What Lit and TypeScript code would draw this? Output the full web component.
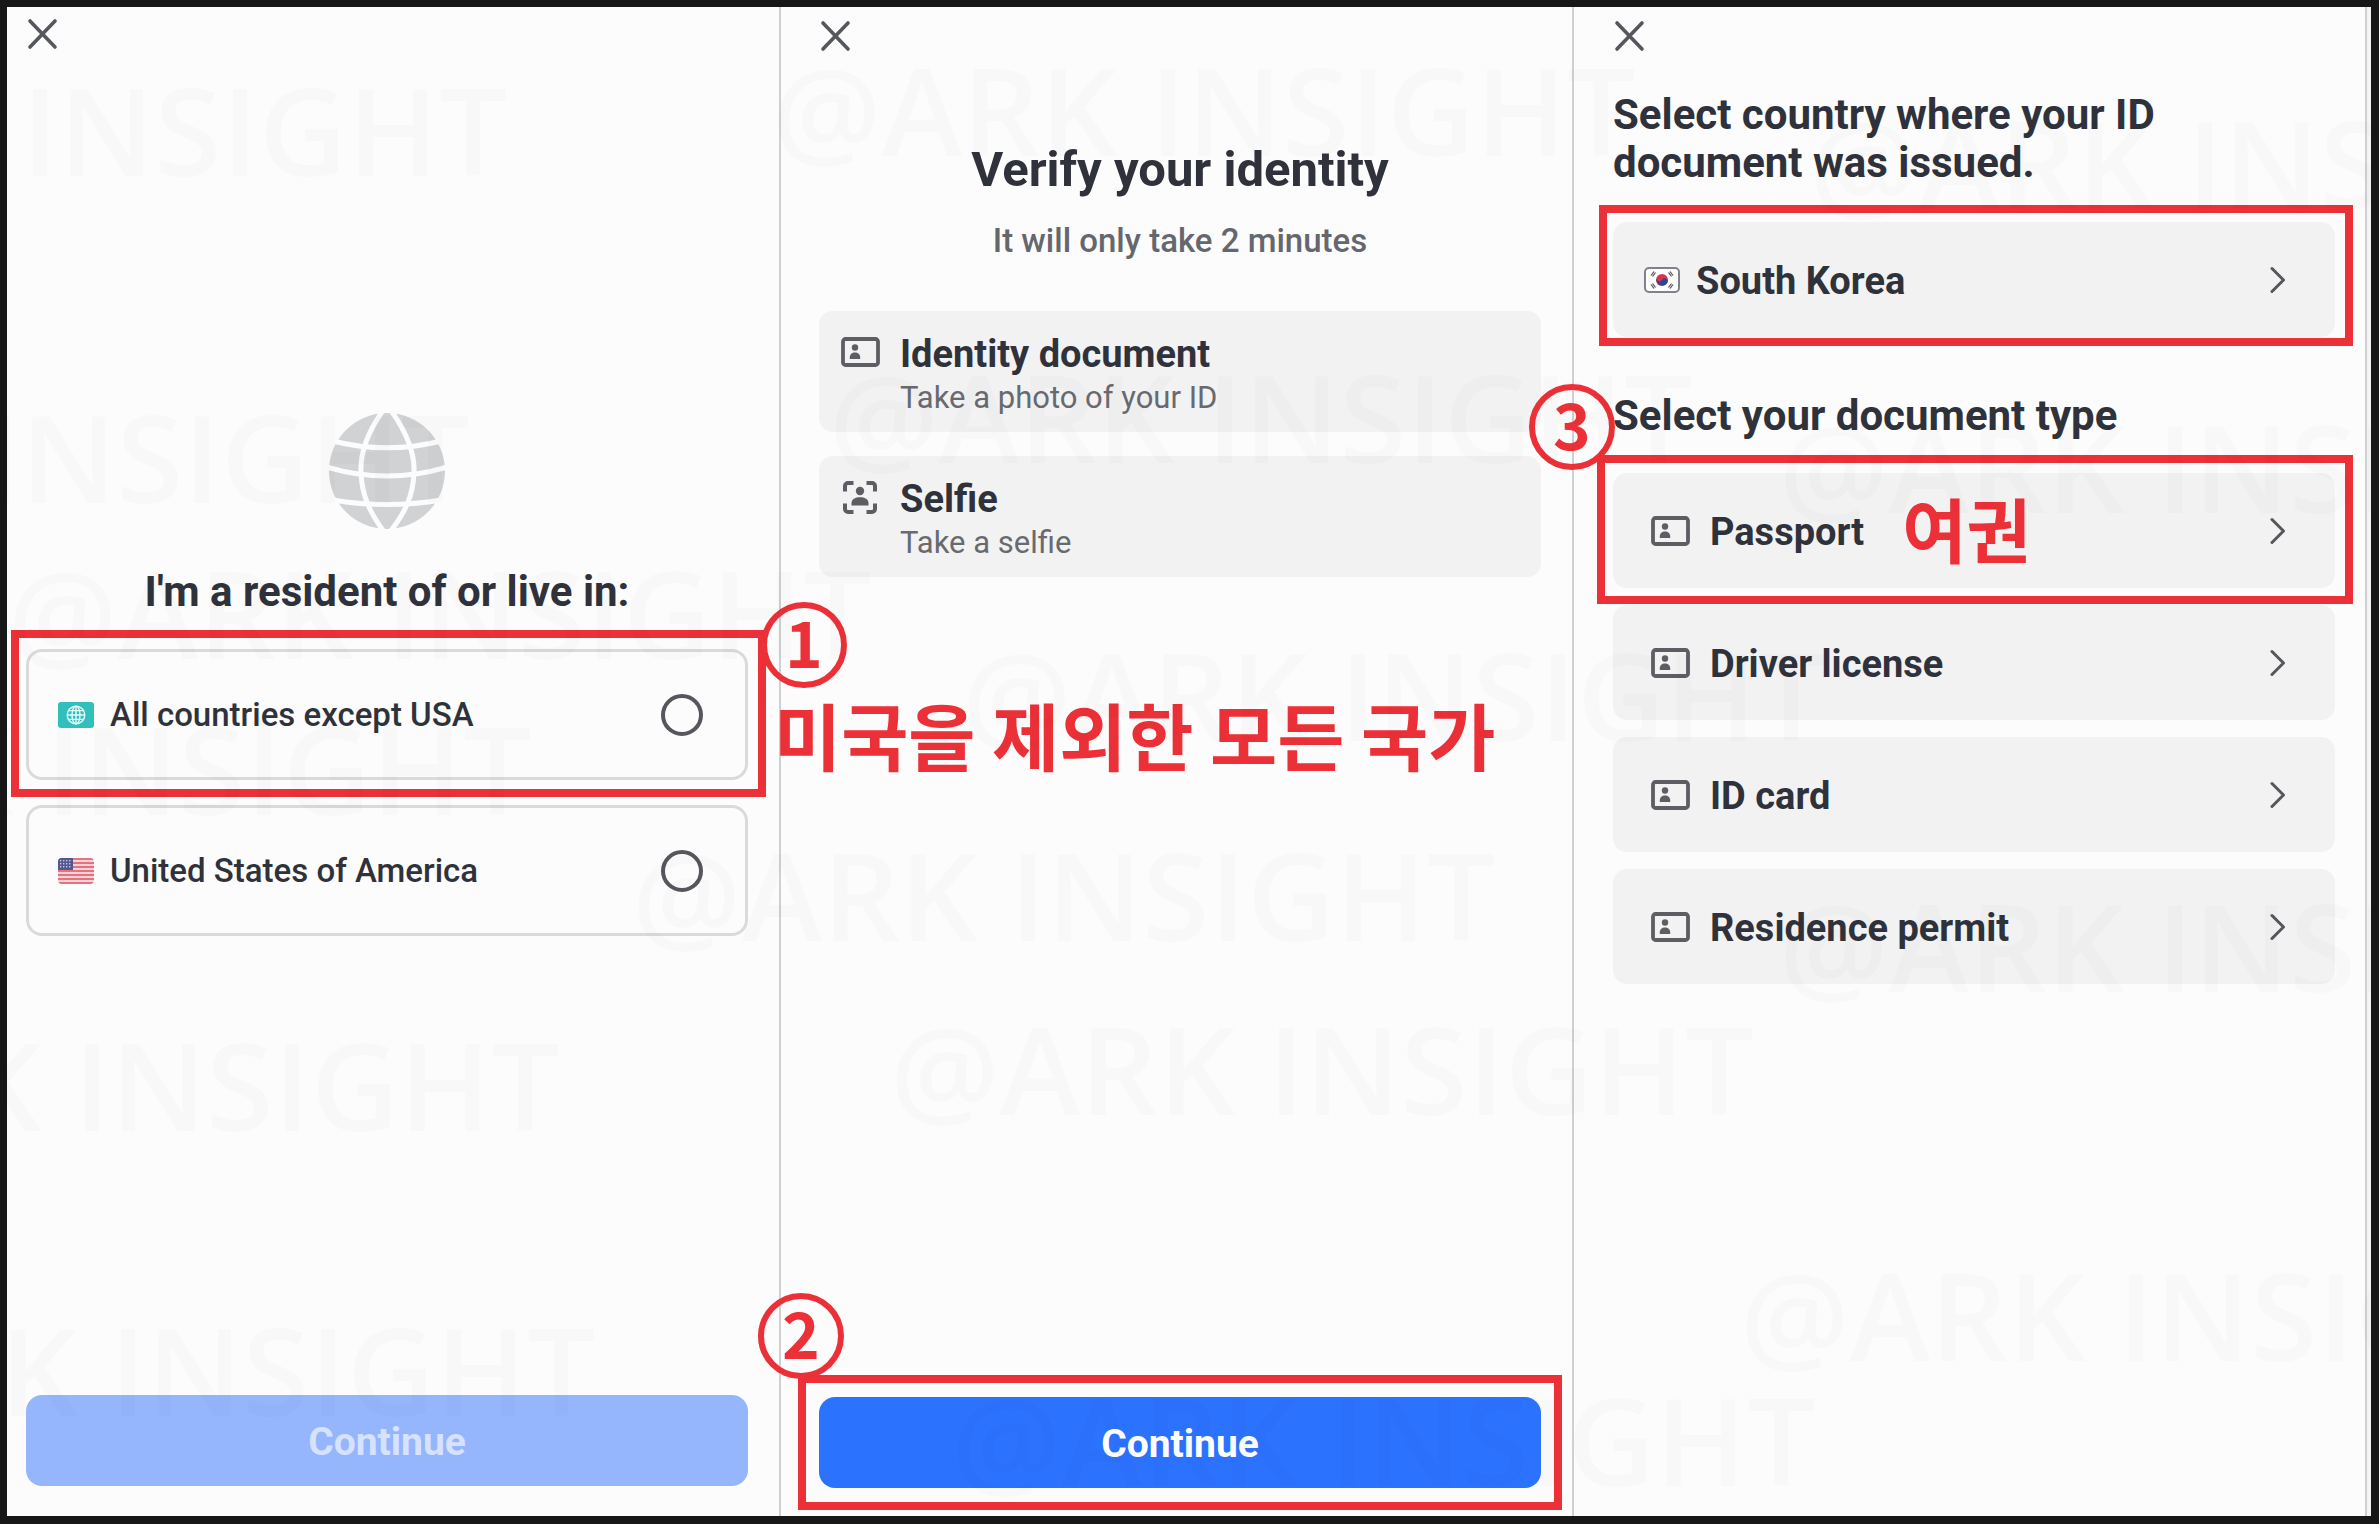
import { LitElement, html, css, svg } from "lit";
import { customElement, property, state } from "lit/decorators.js";
import { styleMap } from "lit/directives/style-map.js";

/* ---------- icons ---------- */

const closeIcon = html`<svg class="icon" width="32" height="32" viewBox="0 0 32 32" aria-hidden="true">
  <path d="M4 3 29 29M29 3 4 29" fill="none" stroke="#55575c" stroke-width="3.6" stroke-linecap="round" />
</svg>`;

const chevronIcon = html`<svg class="icon" width="16" height="28" viewBox="0 0 16 28" aria-hidden="true">
  <path d="M2 2.500 13.500 14 2 25.500" fill="none" stroke="#55575c" stroke-width="3" stroke-linecap="round" stroke-linejoin="round" />
</svg>`;

const documentIcon = html`<svg class="icon" width="40" height="40" viewBox="0 0 40 40" aria-hidden="true">
  <rect x="3" y="7" width="35" height="26" rx="2.500" fill="none" stroke="#5c5e63" stroke-width="3.800" />
  <circle cx="15" cy="15.500" r="3.200" fill="#5c5e63" />
  <path d="M9.800 27v-1.600c0-3.400 2.400-5 5.200-5s5.200 1.600 5.200 5V27z" fill="#5c5e63" />
</svg>`;

const selfieIcon = html`<svg class="icon" width="40" height="40" viewBox="0 0 40 40" aria-hidden="true">
  <g fill="none" stroke="#5c5e63" stroke-width="4">
    <path d="M13.500 6H8a3 3 0 0 0-3 3v5.500" />
    <path d="M26.500 6H32a3 3 0 0 1 3 3v5.500" />
    <path d="M13.500 35H8a3 3 0 0 1-3-3v-5.500" />
    <path d="M26.500 35H32a3 3 0 0 0 3-3v-5.500" />
  </g>
  <circle cx="20" cy="14" r="4.200" fill="#5c5e63" />
  <path d="M11.500 28.500V26c0-3.800 4-5.800 8.500-5.800s8.500 2 8.500 5.800v2.500z" fill="#5c5e63" />
</svg>`;

const globeIcon = html`<svg class="globe" width="116" height="116" viewBox="0 0 116 116" aria-hidden="true">
  <circle cx="58" cy="58" r="58" fill="#d1d2d4" />
  <g fill="none" stroke="#fcfcfc" stroke-width="5">
    <path d="M55 -4C37 21 31 41 32 60c1 22 8 39 24 60" />
    <path d="M61 -4c18 25 25 45 24 64-1 22-8 39-25 60" />
    <path d="M4 28c34 9 74 9 108 0" />
    <path d="M-2 54c38 12 82 12 120 0" />
    <path d="M4 87c34 6 74 6 108 0" />
  </g>
</svg>`;

const worldFlag = html`<svg class="icon" width="36" height="26" viewBox="0 0 36 26" aria-hidden="true">
  <rect width="36" height="26" rx="3" fill="#31bfbb" />
  <g fill="none" stroke="#e6fbfa" stroke-width="1.400">
    <circle cx="18" cy="13" r="8.800" />
    <ellipse cx="18" cy="13" rx="4" ry="8.800" />
    <path d="M9.200 13h17.600M18 4.200v17.600M10.500 8.600h15M10.500 17.400h15" />
  </g>
</svg>`;

const usaFlag = html`<svg class="icon" width="36" height="26" viewBox="0 0 36 26" aria-hidden="true">
  <clipPath id="usa"><rect width="36" height="26" rx="4" /></clipPath>
  <g clip-path="url(#usa)">
    <rect width="36" height="26" fill="#f8d3d6" />
    ${[0, 1, 2, 3, 4, 5, 6].map((i) => svg`<rect y=${i * 4} width="36" height="2" fill="#e27481" />`)}
    <rect width="15" height="12" fill="#55578f" />
    ${[2, 5, 8, 11].map((x) => [2, 5, 8].map((y) => svg`<rect x=${x} y=${y} width="1.400" height="1.400" fill="#c3c5e2" />`))}
  </g>
</svg>`;

const koreaFlag = html`<svg class="icon" width="36" height="26" viewBox="0 0 36 26" aria-hidden="true">
  <rect x="1" y="1" width="34" height="24" rx="4" fill="#fff" stroke="#7f828a" stroke-width="2" />
  <circle cx="18" cy="13" r="6" fill="#d8344c" />
  <path d="M12.600 10.500a3 3 0 0 0 5.400 2.500 3 3 0 0 1 5.400 2.600A6 6 0 0 1 12.600 10.500z" fill="#27479b" />
  <g stroke="#4a4c52" stroke-width="1.200">
    <path d="M7 8.500l3-4M8.500 9.500l3-4M7 17.500l3 4M8.500 16.500l3 4" />
    <path d="M29 8.500l-3-4M27.500 9.500l-3-4M29 17.500l-3 4M27.500 16.500l-3 4" />
  </g>
</svg>`;

/* ---------- data ---------- */

const residences = [
  { id: "world", label: "All countries except USA", flag: worldFlag },
  { id: "usa", label: "United States of America", flag: usaFlag },
];

const documents = ["Driver license", "ID card", "Residence permit"];

/* Corner of each watermark on the canvas. */
const watermarks: [number, number][] = [
  [-356, 68], [-394, 395], [8, 551], [-332, 707], [632, 833], [-304, 1023], [-268, 1308],
  [772, 48], [829, 355], [962, 633], [890, 1007], [952, 1378],
  [1809, 101], [1779, 405], [1779, 884], [1740, 1253],
];

/* ---------- shared styles ---------- */

const shared = css`
  :host {
    box-sizing: border-box;
    font-family: Roboto, "Noto Sans CJK KR", sans-serif;
    color: #30323b;
  }
  *, *::before, *::after { box-sizing: border-box; }
  button { font: inherit; color: inherit; border: 0; margin: 0; cursor: pointer; }
  h2, h3, p { margin: 0; }
  .icon { display: block; flex: none; }
`;

/* Numbered red frame drawn round whatever is slotted into it. */
@customElement("step-mark")
export class StepMark extends LitElement {
  static styles = [shared, css`
    :host { display: block; position: relative; z-index: 1; }
    .frame {
      position: absolute;
      inset: -18px -18px -16px -16px;
      border: 8px solid #ec3037;
      pointer-events: none;
    }
    :host([kind="option"]) .frame { inset: -19px -18px -17px -15px; }
    :host([kind="action"]) .frame { inset: -22px -21px; }
    :host([kind="country"]) .frame { inset: -17px -18px -9px -14px; }
    .number {
      position: absolute;
      display: flex;
      align-items: flex-start;
      justify-content: center;
      width: 86px;
      height: 86px;
      border: 6px solid #ec3037;
      border-radius: 50%;
      font: 700 64px/64px "Noto Sans CJK KR", sans-serif;
      color: #ec3037;
      top: -89px;
      left: -84px;
    }
    :host([kind="option"]) .number { top: -47px; left: 735px; }
    :host([kind="action"]) .number { top: -104px; left: -61px; }
    .caption {
      position: absolute;
      top: 44px;
      left: 748px;
      font: 700 73px/80px "Noto Sans CJK KR", sans-serif;
      color: #ec3037;
      white-space: nowrap;
    }
  `];
  @property() number = "";
  @property() caption = "";
  render() {
    return html`
      <slot></slot>
      <div class="frame"></div>
      ${this.number ? html`<span class="number">${this.number}</span>` : ""}
      ${this.caption ? html`<span class="caption">${this.caption}</span>` : ""}
    `;
  }
}

/* Grey row that opens the next screen. */
@customElement("pick-row")
export class PickRow extends LitElement {
  static styles = [shared, css`
    :host { display: block; }
    .row {
      display: flex;
      align-items: center;
      gap: 20px;
      width: 100%;
      min-height: 115px;
      padding: 0 49px 0 37px;
      border-radius: 14px;
      background: #f2f2f3;
      text-align: left;
    }
    .row.flagged { padding-left: 31px; gap: 16px; }
    .label { padding-top: 3px; font-size: 38px; line-height: 44px; font-weight: 700; }
    .note { margin-left: 18px; padding-bottom: 6px; font: 700 70px/80px "Noto Sans CJK KR", sans-serif; color: #ec3037; }
    .icon:last-child { margin-left: auto; }
  `];
  @property() label = "";
  @property() note = "";
  @property({ type: Boolean }) flagged = false;
  render() {
    return html`<button class="row ${this.flagged ? "flagged" : ""}" type="button">
      ${this.flagged ? koreaFlag : documentIcon}
      <span class="label">${this.label}</span>
      ${this.note ? html`<span class="note">${this.note}</span>` : ""}
      ${chevronIcon}
    </button>`;
  }
}

@customElement("app-root")
export class AppRoot extends LitElement {
  static styles = [shared, css`
    :host {
      display: grid;
      grid-template-columns: 774fr 793fr 793fr;
      position: relative;
      min-height: 100vh;
      padding-right: 4px;
      border: solid #171717;
      border-width: 7px 8px 8px 7px;
      background: #f4f4f4;
      overflow: hidden;
    }
    .panel {
      display: flex;
      flex-direction: column;
      min-width: 0;
      padding: 13px 31px 28px 38px;
      border-right: 2px solid #cfd0d2;
      background: #fcfcfc;
    }
    .panel.residence { padding: 11px 31px 30px 19px; }
    .panel.issuer { padding: 13px 30px 28px 39px; }
    .close { align-self: flex-start; padding: 0; background: none; }
    .globe { display: block; margin: 363px auto 37px; }
    .heading { font-size: 42px; line-height: 48px; font-weight: 700; }
    .residence .heading { line-height: 52px; text-align: center; margin-bottom: 31px; }
    .issuer .heading { margin: 39px 0 35px; max-width: 600px; }
    .issuer .heading.type { margin: 55px 0 33px; }

    .options { display: grid; gap: 25px; margin: 0; padding: 0; border: 0; min-width: 0; }
    .option {
      display: flex;
      align-items: center;
      gap: 16px;
      height: 131px;
      padding: 0 42px 0 29px;
      border: 3px solid #d9dadb;
      border-radius: 16px;
      font-size: 33px;
      line-height: 40px;
      font-weight: 500;
      cursor: pointer;
    }
    .option input {
      appearance: none;
      flex: none;
      width: 42px;
      height: 42px;
      margin: 0 0 0 auto;
      border: 4px solid #55575c;
      border-radius: 50%;
      background: #fcfcfc;
    }
    .option input:checked { border-width: 12px; border-color: #2b72ff; }

    .title { margin-top: 88px; font-size: 49px; line-height: 60px; font-weight: 700; text-align: center; }
    .subtitle { margin: 21px 0 50px; font-size: 33px; line-height: 40px; font-weight: 500; color: #65676e; text-align: center; }
    .steps { display: grid; gap: 24px; margin: 0; padding: 0; list-style: none; }
    .step {
      display: flex;
      gap: 20px;
      padding: 21px 21px 12px;
      border-radius: 14px;
      background: #f2f2f3;
    }
    .step h3 { font-size: 38px; line-height: 44px; font-weight: 700; }
    .step p { font-size: 31px; line-height: 44px; color: #686a70; }

    .action { margin-top: auto; }
    .continue {
      display: block;
      width: 100%;
      height: 91px;
      padding: 2px 0 0;
      border-radius: 16px;
      background: #2b72ff;
      color: #fff;
      font-size: 39px;
      line-height: 48px;
      font-weight: 700;
    }
    .continue:disabled { background: #95b6fd; color: #d6e2fe; cursor: default; }
    .documents { display: grid; gap: 17px; }

    .watermarks { position: absolute; inset: -7px -8px -8px -7px; z-index: 2; overflow: hidden; pointer-events: none; }
    .watermark {
      position: absolute;
      font: 600 122px/122px "Open Sans", sans-serif;
      color: rgba(0, 0, 0, 0.014);
      white-space: nowrap;
    }
  `];

  @state() private residence = "";

  private option(item: (typeof residences)[number]) {
    return html`<label class="option">
      ${item.flag}
      <span>${item.label}</span>
      <input type="radio" name="residence" .value=${item.id}
        .checked=${this.residence === item.id}
        @change=${() => { this.residence = item.id; }} />
    </label>`;
  }

  private closeButton() {
    return html`<button class="close" type="button" aria-label="Close">${closeIcon}</button>`;
  }

  render() {
    return html`
      <section class="panel residence">
        ${this.closeButton()}
        ${globeIcon}
        <h2 class="heading">I'm a resident of or live in:</h2>
        <div class="options" role="radiogroup">
          <step-mark kind="option" number="1" caption="미국을 제외한 모든 국가">${this.option(residences[0])}</step-mark>
          ${this.option(residences[1])}
        </div>
        <div class="action">
          <button class="continue" type="button" ?disabled=${!this.residence}>Continue</button>
        </div>
      </section>

      <section class="panel">
        ${this.closeButton()}
        <h2 class="title">Verify your identity</h2>
        <p class="subtitle">It will only take 2 minutes</p>
        <ul class="steps">
          <li class="step">${documentIcon}<div><h3>Identity document</h3><p>Take a photo of your ID</p></div></li>
          <li class="step">${selfieIcon}<div><h3>Selfie</h3><p>Take a selfie</p></div></li>
        </ul>
        <step-mark class="action" kind="action" number="2">
          <button class="continue" type="button">Continue</button>
        </step-mark>
      </section>

      <section class="panel issuer">
        ${this.closeButton()}
        <h2 class="heading">Select country where your ID document was issued.</h2>
        <step-mark kind="country"><pick-row flagged label="South Korea"></pick-row></step-mark>
        <h2 class="heading type">Select your document type</h2>
        <div class="documents">
          <step-mark kind="document" number="3"><pick-row label="Passport" note="여권"></pick-row></step-mark>
          ${documents.map((name) => html`<pick-row label=${name}></pick-row>`)}
        </div>
      </section>

      <div class="watermarks" aria-hidden="true">
        ${watermarks.map(([x, y]) => html`<span class="watermark" style=${styleMap({ left: `${x}px`, top: `${y}px` })}>@ARK INSIGHT</span>`)}
      </div>
    `;
  }
}
